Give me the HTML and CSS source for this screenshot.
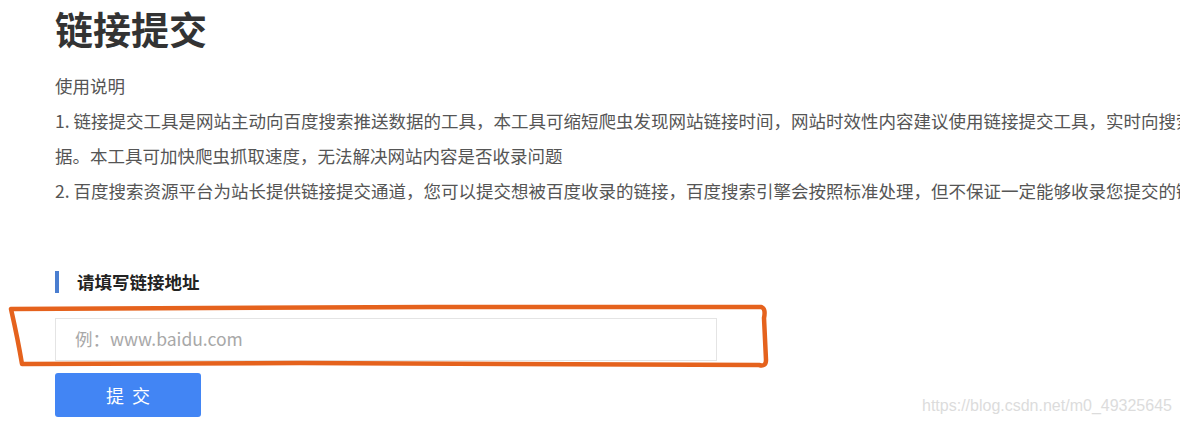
FILE: index.html
```html
<!DOCTYPE html>
<html lang="zh-CN">
<head>
    <meta charset="UTF-8">
    <title>链接提交</title>
    <link rel="stylesheet" href="styles.css">
</head>
<body>

<div class="page">
    <h1 class="title">链接提交</h1>

    <div class="intro">
        <p>使用说明</p>
        <p>1. 链接提交工具是网站主动向百度搜索推送数据的工具，本工具可缩短爬虫发现网站链接时间，网站时效性内容建议使用链接提交工具，实时向搜索推送数据。本工具可加快爬虫抓取速度，无法解决网站内容是否收录问题</p>
        <p>2. 百度搜索资源平台为站长提供链接提交通道，您可以提交想被百度收录的链接，百度搜索引擎会按照标准处理，但不保证一定能够收录您提交的链接。</p>
    </div>

    <div class="form">
        <h2 class="label">请填写链接地址</h2>
        <input class="url" type="text" placeholder="例：www.baidu.com">
        <button class="submit">提 交</button>
    </div>
</div>

<svg class="mark" width="780" height="380" viewBox="0 0 780 380">
    <path d="M11 309 L430 307 L761 307 Q766 308 764 318 L766 360 Q766 367 759 365 L300 363 L22 364 Q18 340 11 309 Z"
          fill="none" stroke="#e5621d" stroke-width="4.5" stroke-linejoin="round"/>
</svg>

<div class="watermark">https://blog.csdn.net/m0_49325645</div>

</body>
</html>
```

FILE: styles.css
```css
html, body, div, h1, h2, p {
    margin: 0;
    padding: 0;
}

body {
    font-family: "Noto Sans CJK SC", "Microsoft YaHei", sans-serif;
    color: #555;
    background: #fff;
    overflow: hidden;
    width: 1180px;
    height: 426px;
    position: relative;
}

.page {
    padding-left: 55px;
    width: 1205px;
}

.title {
    font-size: 38px;
    line-height: 56px;
    font-weight: bold;
    color: #333;
}

.intro {
    margin-top: 12px;
    font-size: 17.5px;
    line-height: 35px;
}

.form {
    margin-top: 63px;
}

.label {
    border-left: 4px solid #4a7ed0;
    padding-left: 18px;
    font-size: 17.5px;
    line-height: 22px;
    font-weight: bold;
    color: #222;
}

.url {
    display: block;
    box-sizing: border-box;
    width: 662px;
    height: 43px;
    margin-top: 25px;
    padding: 0 19px 3px;
    border: 1px solid #e4e4e4;
    font-family: "Noto Sans CJK SC", sans-serif;
    font-size: 17.5px;
    color: #333;
    outline: none;
}

.url::placeholder {
    color: #a8a8a8;
}

.submit {
    display: block;
    width: 146px;
    height: 44px;
    margin-top: 12px;
    border: 0;
    border-radius: 3px;
    background: #4285f4;
    color: #fff;
    font-family: "Noto Sans CJK SC", sans-serif;
    font-size: 18px;
    letter-spacing: 2px;
    text-indent: 2px;
}

.mark {
    position: absolute;
    left: 0;
    top: 0;
}

.watermark {
    position: absolute;
    left: 922px;
    top: 397px;
    font-family: "Liberation Sans", Arial, sans-serif;
    font-size: 16px;
    color: #dcdcdc;
}
```
